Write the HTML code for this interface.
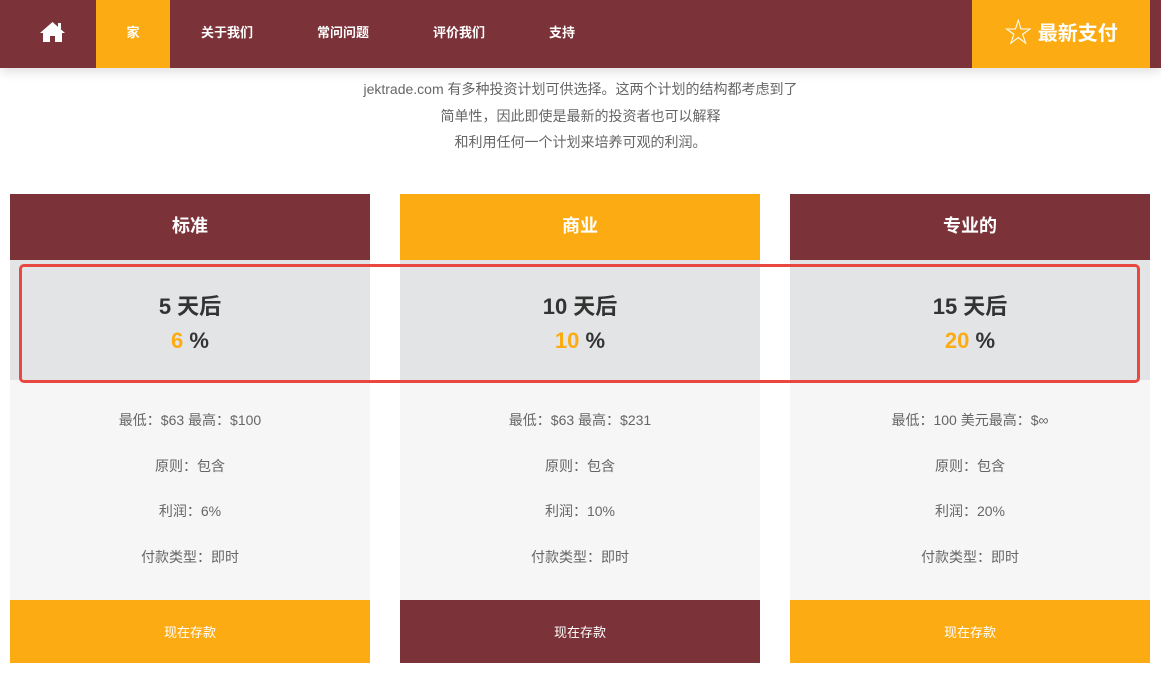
<!DOCTYPE html>
<html><head><meta charset="utf-8"><style>
*{margin:0;padding:0;box-sizing:border-box}
body{width:1161px;height:679px;background:#fff;font-family:"Liberation Sans","Noto Sans CJK SC",sans-serif;position:relative;overflow:hidden}
.nav{position:absolute;left:0;top:0;width:1161px;height:68px;background:#7b3339;box-shadow:0 4px 10px rgba(0,0,0,.12)}
.nav a{position:absolute;top:0;height:68px;line-height:66px;color:#fff;font-weight:bold;font-size:13px;text-align:center}
.pay{position:absolute;left:972px;top:0;width:178px;height:68px;background:#fcac12;color:#fff;font-weight:bold;font-size:20px;line-height:66px;text-align:center}
.intro{position:absolute;top:76px;left:0;width:1161px;text-align:center;color:#666;font-size:14px;line-height:26.5px}
.card{position:absolute;top:194px;width:360px;height:469px;background:#f6f6f6;text-align:center}
.h{height:66px;line-height:64px;color:#fff;font-weight:bold;font-size:18px}
.g{height:120px;background:#e3e4e6;padding-top:32px}
.g .d{font-size:22px;font-weight:bold;color:#333;line-height:30px}
.g .p{font-size:22px;font-weight:bold;color:#333;line-height:38px}
.g .p b{color:#fcac12}
.l{color:#666;font-size:14px;height:45.5px;line-height:45.5px}
.btn{position:absolute;left:0;bottom:0;width:360px;height:63px;line-height:66px;color:#fff;font-size:13px}
.m{background:#7b3339}.o{background:#fcac12}
.box{position:absolute;left:19px;top:264px;width:1121px;height:119px;border:3px solid #e8483f;border-radius:5px}
</style></head><body>
<div class="nav">
<svg style="position:absolute;left:39px;top:21px" width="27" height="22" viewBox="0 0 27 22"><path d="M13.5 1 L1 12 L4 12 L4 21 L11 21 L11 15 L16 15 L16 21 L23 21 L23 12 L26 12 Z" fill="#fff"/><rect x="19" y="2" width="3" height="6" fill="#fff"/></svg>
<a style="left:96px;width:74px;background:#fcac12">家</a>
<a style="left:190px;width:74px">关于我们</a>
<a style="left:306px;width:74px">常问问题</a>
<a style="left:422px;width:74px">评价我们</a>
<a style="left:530px;width:64px">支持</a>
<div class="pay"><span style="font-weight:normal;font-size:28px;vertical-align:-2px">☆</span> 最新支付</div>
</div>
<div class="intro">jektrade.com 有多种投资计划可供选择。这两个计划的结构都考虑到了<br>简单性，因此即使是最新的投资者也可以解释<br>和利用任何一个计划来培养可观的利润。</div>
<div class="card" style="left:10px"><div class="h m">标准</div><div class="g"><div class="d">5 天后</div><div class="p"><b>6</b> %</div></div><div style="height:18px"></div><div class="l">最低：$63 最高：$100</div><div class="l">原则：包含</div><div class="l">利润：6%</div><div class="l">付款类型：即时</div><div class="btn o">现在存款</div></div>
<div class="card" style="left:400px"><div class="h o">商业</div><div class="g"><div class="d">10 天后</div><div class="p"><b>10</b> %</div></div><div style="height:18px"></div><div class="l">最低：$63 最高：$231</div><div class="l">原则：包含</div><div class="l">利润：10%</div><div class="l">付款类型：即时</div><div class="btn m">现在存款</div></div>
<div class="card" style="left:790px"><div class="h m">专业的</div><div class="g"><div class="d">15 天后</div><div class="p"><b>20</b> %</div></div><div style="height:18px"></div><div class="l">最低：100 美元最高：$∞</div><div class="l">原则：包含</div><div class="l">利润：20%</div><div class="l">付款类型：即时</div><div class="btn o">现在存款</div></div>
<div class="box"></div>
</body></html>
